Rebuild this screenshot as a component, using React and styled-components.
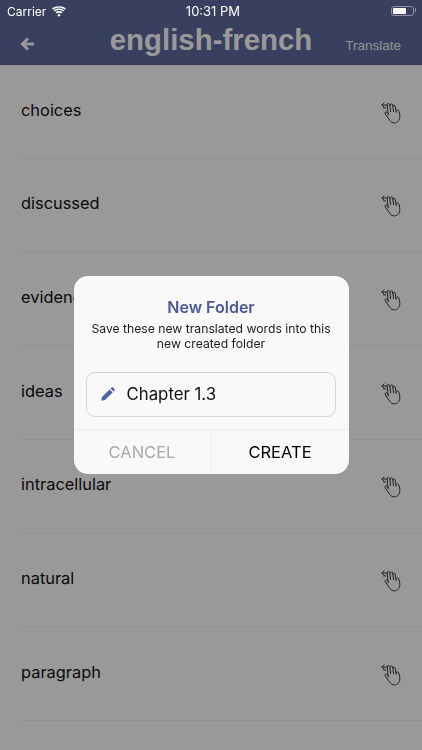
import React from 'react';
import styled, { createGlobalStyle } from 'styled-components';

const GlobalStyle = createGlobalStyle`
  html, body {
    margin: 0;
    padding: 0;
    height: 100%;
    overflow: hidden;
    background: #fff;
    font-family: Inter, "Liberation Sans", sans-serif;
  }
`;

const Page = styled.div`
  width: 422px;
  height: 750px;
  overflow: hidden;
`;

const Header = styled.header`
  height: 66px;
  box-sizing: border-box;
  background: #5f6b9e;
  border-bottom: 1px solid #e8e8e8;
`;

const StatusBar = styled.div`
  position: relative;
  z-index: 2;
  height: 21px;
  box-sizing: border-box;
  display: grid;
  grid-template-columns: 1fr auto 1fr;
  align-items: center;
  padding: 1px 7px 0;
  color: #fff;
  font-size: 13px;
`;

const StatusLeft = styled.div`
  display: flex;
  align-items: center;
  gap: 6px;
  font-size: 12px;
`;

const Clock = styled.span`
  padding-left: 4px;
`;

const Battery = styled.div`
  position: relative;
  justify-self: end;
  width: 19px;
  height: 6px;
  padding: 1px;
  border: 1px solid #8b90a6;
  border-radius: 3px;
  margin: 0 1px 1px 0;

  &::after {
    content: '';
    position: absolute;
    top: 1px;
    right: -3px;
    width: 1px;
    height: 4px;
    background: #8b90a6;
  }
`;

const BatteryFill = styled.div`
  width: 13px;
  height: 6px;
  background: #fff;
  border-radius: 1px;
`;

const NavBar = styled.div`
  height: 44px;
  display: grid;
  grid-template-columns: 90px 1fr 90px;
  align-items: center;
  color: #fff;
`;

const BackButton = styled.div`
  display: flex;
  padding: 1px 0 0 20px;
`;

const Title = styled.h1`
  margin: 0;
  padding-bottom: 7px;
  text-align: center;
  font-family: "Liberation Sans", Arial, sans-serif;
  font-size: 29.4px;
  font-weight: 700;
  line-height: 36px;
  white-space: nowrap;
`;

const NavAction = styled.div`
  font-family: "Liberation Sans", Arial, sans-serif;
  font-size: 13.5px;
  color: #f4f4f4;
  text-align: right;
  padding: 4px 21px 0 0;
`;

const WordList = styled.ul`
  list-style: none;
  margin: -0.5px 0 0;
  padding: 0;
`;

const WordRow = styled.li`
  height: 93.67px;
  box-sizing: border-box;
  display: flex;
  align-items: center;
  justify-content: space-between;
  margin-left: 21px;
  padding: 0 20px 4px 0;
  border-bottom: 1px solid #f2f2f2;
  font-size: 16.4px;
  color: #111;
`;

const HandSlot = styled.span`
  display: flex;
  margin-top: 6px;
`;

const Overlay = styled.div`
  position: fixed;
  inset: 0;
  z-index: 1;
  background: rgba(0, 0, 0, 0.4);
  display: flex;
  align-items: center;
  justify-content: center;
`;

const Dialog = styled.div`
  width: 275px;
  height: 198px;
  box-sizing: border-box;
  display: flex;
  flex-direction: column;
  background: #f9f9f9;
  border-radius: 14px;
  overflow: hidden;
`;

const DialogTitle = styled.h2`
  margin: 22px 0 0;
  text-align: center;
  color: #4b5a94;
  font-size: 16px;
  font-weight: 600;
  line-height: 18px;
`;

const DialogText = styled.p`
  margin: 6px 12px 0;
  text-align: center;
  color: #1c1c1c;
  font-size: 12.2px;
  line-height: 14.5px;
`;

const NameField = styled.div`
  margin: 21px 13px 0 12px;
  height: 45px;
  box-sizing: border-box;
  display: flex;
  align-items: center;
  gap: 12px;
  padding: 0 0 1px 14px;
  border: 1px solid #d6d6d6;
  border-radius: 9px;
  font-size: 16.8px;
  color: #111;
`;

const DialogActions = styled.div`
  margin-top: auto;
  height: 44px;
  display: grid;
  grid-template-columns: 137px 1fr;
  border-top: 1px solid #ececec;
`;

const DialogButton = styled.button`
  appearance: none;
  background: none;
  border: 0;
  padding: 0;
  font: inherit;
  font-size: 16.5px;
  color: ${(p) => (p.$muted ? '#a8a8a8' : '#000')};
  border-left: ${(p) => (p.$muted ? '0' : '1px solid #ececec')};
`;

const WifiIcon = () => (
  <svg width="14" height="11" viewBox="0 0 15 11" fill="#fff">
    <path d="M7.5 8 L9.3 9.4 L7.5 11 L5.7 9.4 Z" />
    <path d="M3.9 6.4 C5.9 4.6 9.1 4.6 11.1 6.4 L9.9 7.7 C8.5 6.5 6.5 6.5 5.1 7.7 Z" />
    <path d="M1.9 4.3 C5 1.6 10 1.6 13.1 4.3 L11.9 5.6 C9.4 3.4 5.6 3.4 3.1 5.6 Z" />
    <path d="M0 2.4 C4.2 -0.8 10.8 -0.8 15 2.4 L13.8 3.6 C10.2 0.9 4.8 0.9 1.2 3.6 Z" />
  </svg>
);

const BackArrow = () => (
  <svg width="15" height="14" viewBox="0 0 15 14" fill="none" stroke="currentColor" strokeWidth="3">
    <path d="M14 7 H3" />
    <path d="M8 1.5 L2.5 7 L8 12.5" />
  </svg>
);

const SwipeHand = () => (
  <svg width="22" height="22" viewBox="0 0 22 23" fill="none" stroke="#333" strokeWidth="1" strokeLinecap="round" strokeLinejoin="round">
    <path d="M7 3.2 H1.5 M3.8 1 L1.5 3.2 L3.8 5.4" />
    <path d="M5.5 6.2 H3.2" />
    <path d="M8 13.5 L7 3 C6.9 1.2 9.4 1 9.7 2.8 L10.6 10" />
    <path d="M10.2 3.5 C10.1 1.6 12.5 1.4 12.8 3.2 L13.6 10" />
    <path d="M13 4.5 C13 3 15.2 2.9 15.5 4.6 L16.4 10.8" />
    <path d="M16.2 9.5 C17 7.5 19 8 19.4 10 C20.4 14 20.8 17 19 19.5 C16.5 22.8 12 22.5 10 19.5 L5 12.5 C4 11 5.8 9.5 7.2 11 L8.6 12.5" />
  </svg>
);

const PencilIcon = () => (
  <svg width="14" height="14" viewBox="0 0 14 14" fill="#4f62a3">
    <path d="M0.3 13.7 L1 10 L8.6 2.4 L11.6 5.4 L4 13 Z" />
    <path d="M9.5 1.5 L10.6 0.5 C11 0.1 11.6 0.1 12 0.5 L13.5 2 C13.9 2.4 13.9 3 13.5 3.4 L12.5 4.5 Z" />
  </svg>
);

const words = ['choices', 'discussed', 'evidence', 'ideas', 'intracellular', 'natural', 'paragraph'];

const App = () => {
  return (
    <Page>
      <GlobalStyle />
      <Header>
        <StatusBar>
          <StatusLeft>
            Carrier
            <WifiIcon />
          </StatusLeft>
          <Clock>10:31 PM</Clock>
          <Battery>
            <BatteryFill />
          </Battery>
        </StatusBar>
        <NavBar>
          <BackButton>
            <BackArrow />
          </BackButton>
          <Title>english-french</Title>
          <NavAction>Translate</NavAction>
        </NavBar>
      </Header>
      <WordList>
        {words.map((word) => (
          <WordRow key={word}>
            {word}
            <HandSlot>
              <SwipeHand />
            </HandSlot>
          </WordRow>
        ))}
      </WordList>
      <Overlay>
        <Dialog>
          <DialogTitle>New Folder</DialogTitle>
          <DialogText>Save these new translated words into this new created folder</DialogText>
          <NameField>
            <PencilIcon />
            Chapter 1.3
          </NameField>
          <DialogActions>
            <DialogButton $muted>CANCEL</DialogButton>
            <DialogButton>CREATE</DialogButton>
          </DialogActions>
        </Dialog>
      </Overlay>
    </Page>
  );
};

export default App;
